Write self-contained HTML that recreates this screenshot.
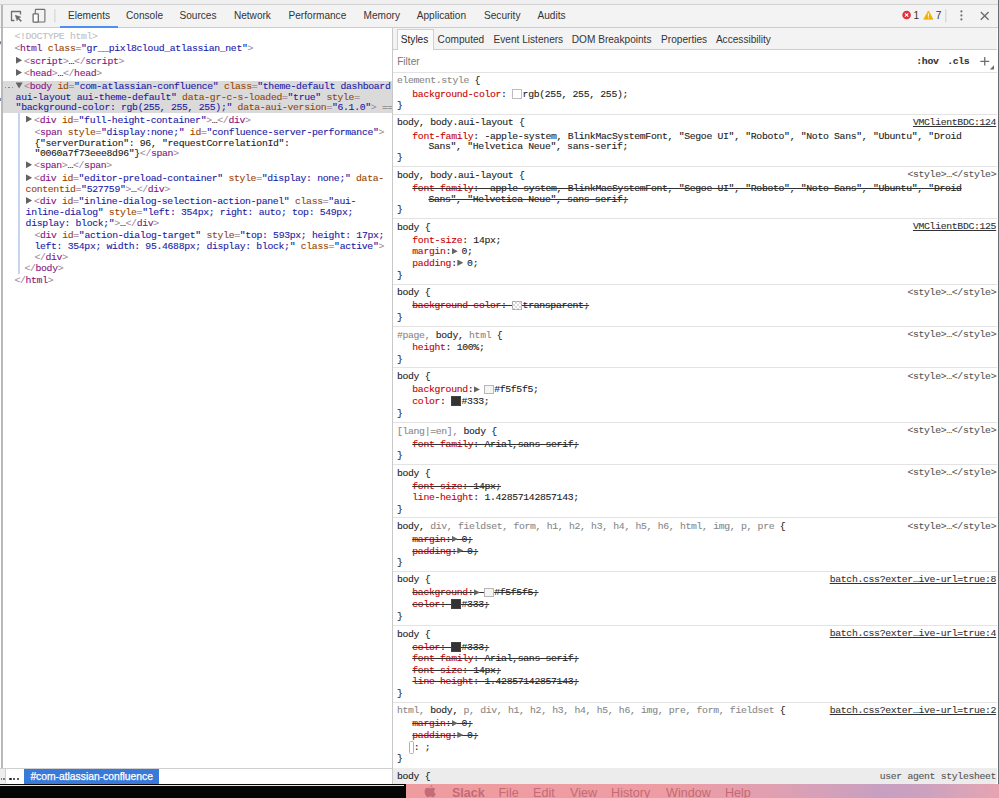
<!DOCTYPE html><html><head><meta charset="utf-8"><style>
*{box-sizing:border-box}
html,body{margin:0;padding:0}
body{width:999px;height:798px;overflow:hidden;position:relative;background:#fff;font-family:"Liberation Sans",sans-serif}
.a{position:absolute}
.l{position:absolute;white-space:pre;font-family:"Liberation Mono",monospace;font-size:9.8px;letter-spacing:-0.33px;line-height:12px;color:#222;-webkit-text-stroke-width:0.1px}
.s{position:absolute;white-space:pre;font-family:"Liberation Sans",sans-serif;font-size:10.1px;line-height:12px;color:#333}
.tg{color:#a08a9e}.tn{color:#881280}.an{color:#994500}.av{color:#1a1aa6}
.pn{color:#c80000}.gr{color:#888}.dk{color:#222}
.st{text-decoration:line-through;text-decoration-color:#333}
.tri{display:inline-block;width:10.4px;height:8px;position:relative;vertical-align:baseline}
.tri:after{content:"";position:absolute;left:0.6px;top:1.9px;width:6px;height:6.4px;background:#666;clip-path:polygon(0 0,100% 50%,0 100%)}
.sw{display:inline-block;width:10.4px;height:8px;position:relative;vertical-align:baseline}
.sw:after{content:"";position:absolute;left:0;top:0.4px;width:7.8px;height:7.8px;border:1px solid rgba(90,90,90,.4);background:var(--c)}
.ln{text-decoration:underline;color:#333}
.st .tri:before,.st .sw:before{content:"";position:absolute;left:0;right:0;top:5px;height:1px;background:#333}
</style></head><body>
<div class="a" style="left:0;top:0;width:999px;height:4px;background:#efefef"></div>
<div class="a" style="left:0;top:4px;width:999px;height:1px;background:#d2d2d2"></div>
<div class="a" style="left:0;top:5px;width:999px;height:21.5px;background:#f3f3f3"></div>
<div class="a" style="left:0;top:26.8px;width:999px;height:1px;background:#cdcdcd"></div>
<div class="a" style="left:1px;top:5px;width:1.6px;height:764px;background:#b9b9b9"></div>
<div class="a" style="left:997.6px;top:0;width:1.4px;height:798px;background:#6a6a72"></div>
<svg class="a" style="left:0;top:0" width="70" height="27" viewBox="0 0 70 27">
<path d="M14.4 20.5 H11.5 V11.5 H20.5 V14.6" fill="none" stroke="#6e6e6e" stroke-width="1.3" stroke-linejoin="round"/>
<path d="M15.1 15.1 L21.0 17.0 L18.9 18.0 L21.7 20.8 L20.8 21.7 L18.0 18.9 L17.0 21.0 Z" fill="#6a6a6a" stroke="#6a6a6a" stroke-width="0.3" stroke-linejoin="round"/>
<rect x="35.3" y="9.4" width="9.6" height="12.6" rx="0.8" fill="none" stroke="#6e6e6e" stroke-width="1.1"/>
<rect x="33.1" y="13.9" width="5.2" height="8.2" rx="0.7" fill="#fff" stroke="#6e6e6e" stroke-width="1.3"/>
<rect x="54.4" y="9.3" width="1" height="13" fill="#cfcfcf"/>
</svg>
<div class="s" style="left:68.0px;top:10.3px;color:#333">Elements</div>
<div class="s" style="left:126.0px;top:10.3px;color:#333">Console</div>
<div class="s" style="left:179.5px;top:10.3px;color:#333">Sources</div>
<div class="s" style="left:233.9px;top:10.3px;color:#333">Network</div>
<div class="s" style="left:288.5px;top:10.3px;color:#333">Performance</div>
<div class="s" style="left:363.5px;top:10.3px;color:#333">Memory</div>
<div class="s" style="left:416.7px;top:10.3px;color:#333">Application</div>
<div class="s" style="left:484.0px;top:10.3px;color:#333">Security</div>
<div class="s" style="left:537.5px;top:10.3px;color:#333">Audits</div>
<div class="a" style="left:60.3px;top:26px;width:58px;height:1.9px;background:#4e8ff3"></div>
<svg class="a" style="left:895px;top:5px" width="100" height="22" viewBox="0 0 100 22">
<circle cx="11.6" cy="10" r="4.3" fill="#e0303a"/>
<path d="M9.9 8.3 L13.3 11.7 M13.3 8.3 L9.9 11.7" stroke="#fff" stroke-width="1.1"/>
<path d="M33.4 5.9 L38 14.2 L28.8 14.2 Z" fill="#f2b100" stroke="#f2b100" stroke-width="0.8" stroke-linejoin="round"/>
<rect x="32.9" y="8.3" width="1" height="3.3" fill="#fff"/><rect x="32.9" y="12.3" width="1" height="1" fill="#fff"/>
<rect x="50.3" y="4.3" width="1" height="13" fill="#cfcfcf"/>
<circle cx="66.4" cy="6.4" r="1.05" fill="#6e6e6e"/><circle cx="66.4" cy="10.4" r="1.05" fill="#6e6e6e"/><circle cx="66.4" cy="14.4" r="1.05" fill="#6e6e6e"/>
<path d="M85.8 6.9 L93.6 14.7 M93.6 6.9 L85.8 14.7" stroke="#6e6e6e" stroke-width="1.4"/>
</svg>
<div class="s" style="left:913.6px;top:10px">1</div>
<div class="s" style="left:935.8px;top:10px">7</div>
<div class="a" style="left:392px;top:27.5px;width:1.3px;height:756px;background:#c9c9c9"></div>
<div class="a" style="left:393.3px;top:27.5px;width:604px;height:21.6px;background:#f3f3f3"></div>
<div class="a" style="left:393.3px;top:49px;width:604px;height:1px;background:#cdcdcd"></div>
<div class="a" style="left:397.2px;top:29.2px;width:36.4px;height:20.4px;background:#fbfbfb;border:1px solid #d0d0d0;border-bottom:none;border-radius:1px 1px 0 0"></div>
<div class="s" style="left:400.8px;top:34.4px;color:#222">Styles</div>
<div class="s" style="left:437.6px;top:34.4px;color:#333">Computed</div>
<div class="s" style="left:493.6px;top:34.4px;color:#333">Event Listeners</div>
<div class="s" style="left:571.8px;top:34.4px;color:#333">DOM Breakpoints</div>
<div class="s" style="left:661.1px;top:34.4px;color:#333">Properties</div>
<div class="s" style="left:715.9px;top:34.4px;color:#333">Accessibility</div>
<div class="s" style="left:397.2px;top:55.6px;color:#777">Filter</div>
<div class="a" style="left:393.3px;top:71.8px;width:604px;height:1px;background:#dedede"></div>
<div class="l" style="left:916.3px;top:55.9px;font-weight:bold;color:#333">:hov</div>
<div class="l" style="left:947.2px;top:55.9px;font-weight:bold;color:#333">.cls</div>
<svg class="a" style="left:975px;top:52px" width="22" height="20" viewBox="0 0 22 20">
<path d="M5.3 9.3 H14.2 M9.75 5 V13.5" stroke="#6e6e6e" stroke-width="1.3"/>
<path d="M19 13.2 L19 17.4 L14.8 17.4 Z" fill="#6e6e6e"/>
</svg>
<div class="a" style="left:393.3px;top:71.5px;width:604px;height:1px;background:#e3e3e3"></div>
<div class="a" style="left:393.3px;top:113.6px;width:604px;height:1px;background:#e3e3e3"></div>
<div class="a" style="left:393.3px;top:165.8px;width:604px;height:1px;background:#e3e3e3"></div>
<div class="a" style="left:393.3px;top:218.0px;width:604px;height:1px;background:#e3e3e3"></div>
<div class="a" style="left:393.3px;top:283.5px;width:604px;height:1px;background:#e3e3e3"></div>
<div class="a" style="left:393.3px;top:325.9px;width:604px;height:1px;background:#e3e3e3"></div>
<div class="a" style="left:393.3px;top:367.4px;width:604px;height:1px;background:#e3e3e3"></div>
<div class="a" style="left:393.3px;top:421.8px;width:604px;height:1px;background:#e3e3e3"></div>
<div class="a" style="left:393.3px;top:463.8px;width:604px;height:1px;background:#e3e3e3"></div>
<div class="a" style="left:393.3px;top:517.2px;width:604px;height:1px;background:#e3e3e3"></div>
<div class="a" style="left:393.3px;top:570.6px;width:604px;height:1px;background:#e3e3e3"></div>
<div class="a" style="left:393.3px;top:624.8px;width:604px;height:1px;background:#e3e3e3"></div>
<div class="a" style="left:393.3px;top:701.5px;width:604px;height:1px;background:#e3e3e3"></div>
<div class="l" style="left:396.90px;top:75.20px;"><span class="gr">element.style</span> {</div>
<div class="l" style="left:412.30px;top:88.50px;"><span class="pn">background-color</span>: <i class="sw" style="--c:#fff"></i>rgb(255, 255, 255);</div>
<div class="l" style="left:396.90px;top:100.00px;">}</div>
<div class="l" style="left:396.90px;top:117.30px;">body, body.aui-layout {</div>
<div class="l ln" style="left:912.95px;top:116.90px;">VMClientBDC:124</div>
<div class="l" style="left:412.30px;top:130.50px;"><span class="pn">font-family</span>: -apple-system, BlinkMacSystemFont, "Segoe UI", "Roboto", "Noto Sans", "Ubuntu", "Droid</div>
<div class="l" style="left:428.39px;top:141.40px;">Sans", "Helvetica Neue", sans-serif;</div>
<div class="l" style="left:396.90px;top:152.10px;">}</div>
<div class="l" style="left:396.90px;top:169.50px;">body, body.aui-layout {</div>
<div class="l" style="left:907.40px;top:169.10px;color:#555;">&lt;style&gt;…&lt;/style&gt;</div>
<div class="l st" style="left:412.30px;top:182.70px;"><span class="pn">font-family</span>: -apple-system, BlinkMacSystemFont, "Segoe UI", "Roboto", "Noto Sans", "Ubuntu", "Droid</div>
<div class="l st" style="left:428.39px;top:193.60px;">Sans", "Helvetica Neue", sans-serif;</div>
<div class="l" style="left:396.90px;top:204.30px;">}</div>
<div class="l" style="left:396.90px;top:221.70px;">body {</div>
<div class="l ln" style="left:912.95px;top:221.30px;">VMClientBDC:125</div>
<div class="l" style="left:412.30px;top:234.70px;"><span class="pn">font-size</span>: 14px;</div>
<div class="l" style="left:412.30px;top:246.20px;"><span class="pn">margin</span>:<i class="tri"></i>0;</div>
<div class="l" style="left:412.30px;top:257.70px;"><span class="pn">padding</span>:<i class="tri"></i>0;</div>
<div class="l" style="left:396.90px;top:269.70px;">}</div>
<div class="l" style="left:396.90px;top:287.20px;">body {</div>
<div class="l" style="left:907.40px;top:286.80px;color:#555;">&lt;style&gt;…&lt;/style&gt;</div>
<div class="l st" style="left:412.30px;top:300.20px;"><span class="pn">background-color</span>: <i class="sw" style="--c:repeating-conic-gradient(#ddd 0 25%,#fff 0 50%) 0 0/4px 4px"></i>transparent;</div>
<div class="l" style="left:396.90px;top:311.50px;">}</div>
<div class="l" style="left:396.90px;top:329.60px;"><span class="gr">#page,</span> body, <span class="gr">html</span> {</div>
<div class="l" style="left:907.40px;top:329.20px;color:#555;">&lt;style&gt;…&lt;/style&gt;</div>
<div class="l" style="left:412.30px;top:342.40px;"><span class="pn">height</span>: 100%;</div>
<div class="l" style="left:396.90px;top:353.60px;">}</div>
<div class="l" style="left:396.90px;top:371.10px;">body {</div>
<div class="l" style="left:907.40px;top:370.70px;color:#555;">&lt;style&gt;…&lt;/style&gt;</div>
<div class="l" style="left:412.30px;top:384.30px;"><span class="pn">background</span>:<i class="tri"></i><i class="sw" style="--c:#f5f5f5"></i>#f5f5f5;</div>
<div class="l" style="left:412.30px;top:396.00px;"><span class="pn">color</span>: <i class="sw" style="--c:#333"></i>#333;</div>
<div class="l" style="left:396.90px;top:407.70px;">}</div>
<div class="l" style="left:396.90px;top:425.50px;"><span class="gr">[lang|=en],</span> body {</div>
<div class="l" style="left:907.40px;top:425.10px;color:#555;">&lt;style&gt;…&lt;/style&gt;</div>
<div class="l st" style="left:412.30px;top:438.50px;"><span class="pn">font-family</span>: Arial,sans-serif;</div>
<div class="l" style="left:396.90px;top:449.90px;">}</div>
<div class="l" style="left:396.90px;top:467.50px;">body {</div>
<div class="l" style="left:907.40px;top:467.10px;color:#555;">&lt;style&gt;…&lt;/style&gt;</div>
<div class="l st" style="left:412.30px;top:480.50px;"><span class="pn">font-size</span>: 14px;</div>
<div class="l" style="left:412.30px;top:492.10px;"><span class="pn">line-height</span>: 1.42857142857143;</div>
<div class="l" style="left:396.90px;top:503.70px;">}</div>
<div class="l" style="left:396.90px;top:520.90px;">body, <span class="gr">div, fieldset, form, h1, h2, h3, h4, h5, h6, html, img, p, pre</span> {</div>
<div class="l" style="left:907.40px;top:520.50px;color:#555;">&lt;style&gt;…&lt;/style&gt;</div>
<div class="l st" style="left:412.30px;top:533.90px;"><span class="pn">margin</span>:<i class="tri"></i>0;</div>
<div class="l st" style="left:412.30px;top:545.50px;"><span class="pn">padding</span>:<i class="tri"></i>0;</div>
<div class="l" style="left:396.90px;top:557.10px;">}</div>
<div class="l" style="left:396.90px;top:574.30px;">body {</div>
<div class="l ln" style="left:829.70px;top:573.90px;">batch.css?exter…ive-url=true:8</div>
<div class="l st" style="left:412.30px;top:587.30px;"><span class="pn">background</span>:<i class="tri"></i><i class="sw" style="--c:#f5f5f5"></i>#f5f5f5;</div>
<div class="l st" style="left:412.30px;top:598.90px;"><span class="pn">color</span>: <i class="sw" style="--c:#333"></i>#333;</div>
<div class="l" style="left:396.90px;top:610.90px;">}</div>
<div class="l" style="left:396.90px;top:628.50px;">body {</div>
<div class="l ln" style="left:829.70px;top:628.10px;">batch.css?exter…ive-url=true:4</div>
<div class="l st" style="left:412.30px;top:641.70px;"><span class="pn">color</span>: <i class="sw" style="--c:#333"></i>#333;</div>
<div class="l st" style="left:412.30px;top:653.10px;"><span class="pn">font-family</span>: Arial,sans-serif;</div>
<div class="l st" style="left:412.30px;top:664.60px;"><span class="pn">font-size</span>: 14px;</div>
<div class="l st" style="left:412.30px;top:676.20px;"><span class="pn">line-height</span>: 1.42857142857143;</div>
<div class="l" style="left:396.90px;top:688.30px;">}</div>
<div class="l" style="left:396.90px;top:705.20px;"><span class="gr">html,</span> body, <span class="gr">p, div, h1, h2, h3, h4, h5, h6, img, pre, form, fieldset</span> {</div>
<div class="l ln" style="left:829.70px;top:704.80px;">batch.css?exter…ive-url=true:2</div>
<div class="l st" style="left:412.30px;top:718.20px;"><span class="pn">margin</span>:<i class="tri"></i>0;</div>
<div class="l st" style="left:412.30px;top:729.80px;"><span class="pn">padding</span>:<i class="tri"></i>0;</div>
<div class="l" style="left:412.30px;top:741.40px;"><span style="display:inline-block;width:4.8px;height:12.4px;border:1px solid #b0b0b0;border-radius:1.5px;vertical-align:-3px;margin-left:-3.2px;margin-right:-0.2px;background:#fff"></span>: ;</div>
<div class="l" style="left:396.90px;top:752.60px;">}</div>
<div class="a" style="left:393.3px;top:767.8px;width:604px;height:15.8px;background:#ececec;border-radius:0 0 3px 0"></div>
<div class="l" style="left:396.90px;top:771.00px;">body {</div>
<div class="l" style="left:879.65px;top:770.50px;color:#555;">user agent stylesheet</div>
<div class="a" style="left:0;top:0;width:392px;height:768px;overflow:hidden">
<div class="a" style="left:2.6px;top:81.1px;width:389.4px;height:31.5px;background:#dadada"></div>
<div class="a" style="left:18.4px;top:112.6px;width:1.3px;height:161.8px;background:#c6d4ee"></div>
<div class="l" style="left:14.40px;top:30.60px;"><span style="color:#c0c0c0">&lt;!DOCTYPE html&gt;</span></div>
<div class="l" style="left:14.40px;top:43.00px;"><span class="tg">&lt;</span><span class="tn">html</span> <span class="an">class</span><span class="tg">=</span><span class="av">"gr__pixl8cloud_atlassian_net"</span><span class="tg">&gt;</span></div>
<div class="a" style="left:15.90px;top:56.70px;width:6.2px;height:7px;background:#626262;clip-path:polygon(0 0,100% 50%,0 100%)"></div>
<div class="l" style="left:24.10px;top:55.60px;"><span class="tg">&lt;</span><span class="tn">script</span><span class="tg">&gt;</span>…<span class="tg">&lt;/</span><span class="tn">script</span><span class="tg">&gt;</span></div>
<div class="a" style="left:15.90px;top:68.90px;width:6.2px;height:7px;background:#626262;clip-path:polygon(0 0,100% 50%,0 100%)"></div>
<div class="l" style="left:24.10px;top:67.80px;"><span class="tg">&lt;</span><span class="tn">head</span><span class="tg">&gt;</span>…<span class="tg">&lt;/</span><span class="tn">head</span><span class="tg">&gt;</span></div>
<div class="a" style="left:4.9px;top:86.6px;width:1.6px;height:1.6px;border-radius:50%;background:#777"></div>
<div class="a" style="left:8.3px;top:86.6px;width:1.6px;height:1.6px;border-radius:50%;background:#777"></div>
<div class="a" style="left:11.7px;top:86.6px;width:1.6px;height:1.6px;border-radius:50%;background:#777"></div>
<div class="a" style="left:15.60px;top:82.40px;width:7px;height:6.2px;background:#626262;clip-path:polygon(0 0,100% 0,50% 100%)"></div>
<div class="l" style="left:24.10px;top:80.50px;"><span class="tg">&lt;</span><span class="tn">body</span> <span class="an">id</span><span class="tg">=</span><span class="av">"com-atlassian-confluence"</span> <span class="an">class</span><span class="tg">=</span><span class="av">"theme-default dashboard</span></div>
<div class="l" style="left:15.60px;top:91.50px;"><span class="av">aui-layout aui-theme-default"</span> <span class="an">data-gr-c-s-loaded</span><span class="tg">=</span><span class="av">"true"</span> <span class="an">style</span><span class="tg">=</span></div>
<div class="l" style="left:15.60px;top:101.70px;"><span class="av">"background-color: rgb(255, 255, 255);"</span> <span class="an">data-aui-version</span><span class="tg">=</span><span class="av">"6.1.0"</span><span class="tg">&gt;</span> <span style="color:#888">== $0</span></div>
<div class="a" style="left:25.90px;top:115.60px;width:6.2px;height:7px;background:#626262;clip-path:polygon(0 0,100% 50%,0 100%)"></div>
<div class="l" style="left:34.10px;top:114.50px;"><span class="tg">&lt;</span><span class="tn">div</span> <span class="an">id</span><span class="tg">=</span><span class="av">"full-height-container"</span><span class="tg">&gt;</span>…<span class="tg">&lt;/</span><span class="tn">div</span><span class="tg">&gt;</span></div>
<div class="l" style="left:34.40px;top:126.80px;"><span class="tg">&lt;</span><span class="tn">span</span> <span class="an">style</span><span class="tg">=</span><span class="av">"display:none;"</span> <span class="an">id</span><span class="tg">=</span><span class="av">"confluence-server-performance"</span><span class="tg">&gt;</span></div>
<div class="l" style="left:34.40px;top:137.50px;"><span style="color:#222">{"serverDuration": 96, "requestCorrelationId":</span></div>
<div class="l" style="left:34.40px;top:148.30px;"><span style="color:#222">"0060a7f73eee8d96"}</span><span class="tg">&lt;/</span><span class="tn">span</span><span class="tg">&gt;</span></div>
<div class="a" style="left:25.90px;top:161.30px;width:6.2px;height:7px;background:#626262;clip-path:polygon(0 0,100% 50%,0 100%)"></div>
<div class="l" style="left:34.10px;top:160.20px;"><span class="tg">&lt;</span><span class="tn">span</span><span class="tg">&gt;</span>…<span class="tg">&lt;/</span><span class="tn">span</span><span class="tg">&gt;</span></div>
<div class="a" style="left:25.90px;top:174.20px;width:6.2px;height:7px;background:#626262;clip-path:polygon(0 0,100% 50%,0 100%)"></div>
<div class="l" style="left:34.10px;top:173.10px;"><span class="tg">&lt;</span><span class="tn">div</span> <span class="an">id</span><span class="tg">=</span><span class="av">"editor-preload-container"</span> <span class="an">style</span><span class="tg">=</span><span class="av">"display: none;"</span> <span class="an">data-</span></div>
<div class="l" style="left:25.60px;top:184.10px;"><span class="an">contentid</span><span class="tg">=</span><span class="av">"527759"</span><span class="tg">&gt;</span>…<span class="tg">&lt;/</span><span class="tn">div</span><span class="tg">&gt;</span></div>
<div class="a" style="left:25.90px;top:196.90px;width:6.2px;height:7px;background:#626262;clip-path:polygon(0 0,100% 50%,0 100%)"></div>
<div class="l" style="left:34.10px;top:195.80px;"><span class="tg">&lt;</span><span class="tn">div</span> <span class="an">id</span><span class="tg">=</span><span class="av">"inline-dialog-selection-action-panel"</span> <span class="an">class</span><span class="tg">=</span><span class="av">"aui-</span></div>
<div class="l" style="left:25.60px;top:206.80px;"><span class="av">inline-dialog"</span> <span class="an">style</span><span class="tg">=</span><span class="av">"left: 354px; right: auto; top: 549px;</span></div>
<div class="l" style="left:25.60px;top:217.80px;"><span class="av">display: block;"</span><span class="tg">&gt;</span>…<span class="tg">&lt;/</span><span class="tn">div</span><span class="tg">&gt;</span></div>
<div class="l" style="left:34.40px;top:229.60px;"><span class="tg">&lt;</span><span class="tn">div</span> <span class="an">id</span><span class="tg">=</span><span class="av">"action-dialog-target"</span> <span class="an">style</span><span class="tg">=</span><span class="av">"top: 593px; height: 17px;</span></div>
<div class="l" style="left:34.40px;top:240.60px;"><span class="av">left: 354px; width: 95.4688px; display: block;"</span> <span class="an">class</span><span class="tg">=</span><span class="av">"active"</span><span class="tg">&gt;</span></div>
<div class="l" style="left:34.40px;top:251.70px;"><span class="tg">&lt;/</span><span class="tn">div</span><span class="tg">&gt;</span></div>
<div class="l" style="left:24.40px;top:262.80px;"><span class="tg">&lt;/</span><span class="tn">body</span><span class="tg">&gt;</span></div>
<div class="l" style="left:14.40px;top:275.10px;"><span class="tg">&lt;/</span><span class="tn">html</span><span class="tg">&gt;</span></div>
</div>
<div class="a" style="left:0;top:768.3px;width:392px;height:1px;background:#cfcfcf"></div>
<div class="a" style="left:0;top:769px;width:392px;height:15px;background:#fff"></div>
<div class="a" style="left:0;top:769px;width:5.6px;height:14.5px;background:#eeeeee;border-right:1px solid #cfcfcf;border-radius:0 0 2px 0"></div>
<div class="a" style="left:9.4px;top:777.5px;width:2.2px;height:2.2px;border-radius:50%;background:#222"></div>
<div class="a" style="left:13.0px;top:777.5px;width:2.2px;height:2.2px;border-radius:50%;background:#222"></div>
<div class="a" style="left:16.6px;top:777.5px;width:2.2px;height:2.2px;border-radius:50%;background:#222"></div>
<div class="a" style="left:24.3px;top:768.8px;width:134.6px;height:15px;background:#3879d9"></div>
<div class="s" style="left:30.4px;top:771.0px;color:#fff;font-size:10.3px;-webkit-text-stroke:0.25px #fff">#com-atlassian-confluence</div>
<div class="a" style="left:0.6px;top:778.2px;width:1.6px;height:1.6px;background:#8a7a70"></div>
<div class="a" style="left:3.0px;top:778.2px;width:1.6px;height:1.6px;background:#8a7a70"></div>
<div class="a" style="left:0;top:783.6px;width:406px;height:14.4px;background:#050505"></div>
<div class="a" style="left:0;top:785px;width:404px;height:1px;background:#e8e8e8"></div>
<div class="a" style="left:405.7px;top:783.6px;width:593.3px;height:14.4px;background:linear-gradient(90deg,#ef9c9f 0%,#ed9da4 45%,#e29fb0 60%,#d3a0ba 72%,#c79fc1 80%,#cba1bf 87%,#d9a4b8 94%,#e6a3b2 100%)"></div>
<svg class="a" style="left:420px;top:784px" width="20" height="14" viewBox="0 0 20 14"><path d="M10.3 3.2 C10.3 1.9 11.2 1.0 12.2 0.9 C12.3 2.1 11.4 3.1 10.3 3.2 Z M7.6 3.7 C9 3.7 9.5 4.3 10.4 4.3 C11.3 4.3 11.8 3.7 13.2 3.7 C14.2 3.7 15 4.4 15.4 5 C13.4 6.1 13.8 9 15.7 9.7 C15.3 11 14.3 13.2 12.9 13.2 C11.9 13.2 11.6 12.6 10.4 12.6 C9.2 12.6 8.9 13.2 7.9 13.2 C6.3 13.2 4.6 10 4.6 7.5 C4.6 5.2 6 3.7 7.6 3.7 Z" fill="#c46d78"/></svg>
<div class="s" style="left:451.9px;top:784.6px;font-size:12.6px;line-height:16px;color:#c56a74;font-weight:bold;">Slack</div>
<div class="s" style="left:498.4px;top:784.6px;font-size:12.6px;line-height:16px;color:#c56a74;">File</div>
<div class="s" style="left:533.0px;top:784.6px;font-size:12.6px;line-height:16px;color:#c56a74;">Edit</div>
<div class="s" style="left:570.0px;top:784.6px;font-size:12.6px;line-height:16px;color:#c56a74;">View</div>
<div class="s" style="left:611.1px;top:784.6px;font-size:12.6px;line-height:16px;color:#c56a74;">History</div>
<div class="s" style="left:666.1px;top:784.6px;font-size:12.6px;line-height:16px;color:#c56a74;">Window</div>
<div class="s" style="left:724.9px;top:784.6px;font-size:12.6px;line-height:16px;color:#c56a74;">Help</div>
<div class="a" style="left:0;top:40.5px;width:1.2px;height:4.5px;background:#5a6a8a;clip-path:polygon(0 0,100% 50%,0 100%)"></div>
<div class="a" style="left:0;top:97.5px;width:1px;height:3px;background:#7a8aaa"></div>
</body></html>
